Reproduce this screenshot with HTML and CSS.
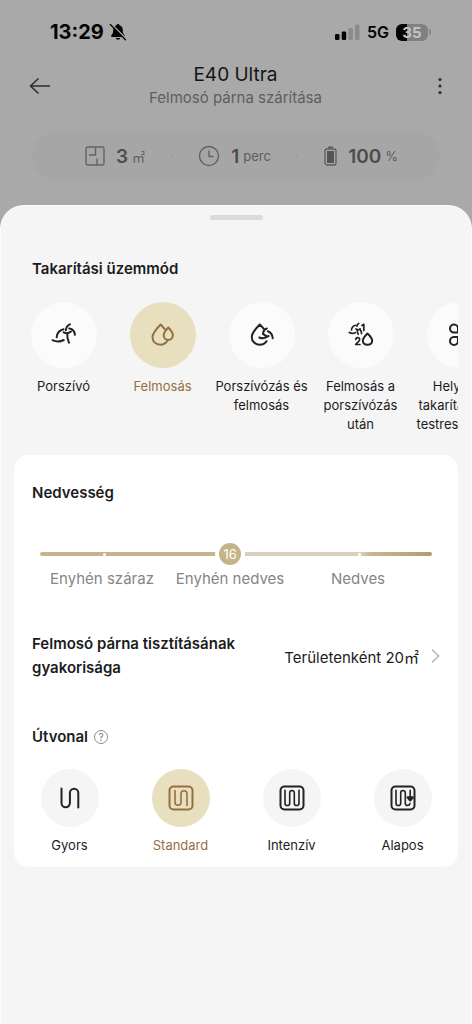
FILE: index.html
```html
<!DOCTYPE html>
<html lang="hu">
<head>
<meta charset="utf-8">
<meta name="viewport" content="width=device-width, initial-scale=1">
<title>E40 Ultra</title>
<link rel="stylesheet" href="styles.css">
</head>
<body>
<div class="screen">
  <div class="status-bar">
    <div class="status-time">13:29
      <svg width="18" height="18" viewBox="0 0 18 18" aria-hidden="true"><path d="M9 1c-.9 0-1.400.5-1.500 1.200C5.200 2.900 4.200 4.800 4.200 7c0 3-.7 4-1.700 5-.8.900-.4 2 .6 2h11.800c1 0 1.400-1.100.6-2-1-1-1.700-2-1.700-5 0-2.200-1-4.100-3.300-4.800C10.400 1.500 9.900 1 9 1zM6.800 15h4.400c-.2 1-1.100 1.700-2.200 1.700S7 16 6.800 15z" fill="#050505"/><path d="M2.600 1.200 17.300 15.900" stroke="#a9a9a9" stroke-width="1.600"/><path d="M1.300 1.500 16.500 16.700" stroke="#050505" stroke-width="1.300" stroke-linecap="round"/></svg>
    </div>
    <div class="status-right">
      <svg width="25" height="16" viewBox="0 0 25 16" aria-hidden="true"><rect x="0" y="10" width="4.500" height="6" rx="1.300" fill="#050505"/><rect x="6.700" y="7.500" width="4.500" height="8.500" rx="1.300" fill="#050505"/><rect x="13.400" y="4" width="4.500" height="12" rx="1.300" fill="#8b8b8b"/><rect x="20" y="0.500" width="4.500" height="15.500" rx="1.300" fill="#8b8b8b"/></svg>
      <span>5G</span>
      <span class="battery"><span class="battery-level">35</span></span>
    </div>
  </div>

  <header class="header">
    <button class="icon-button" type="button" aria-label="Vissza"><svg width="22" height="18" viewBox="0 0 22 18"><path d="M9.500 1.500 1.500 9l8 7.500M1.500 9H21" fill="none" stroke="#2c2c2c" stroke-width="1.500"/></svg></button>
    <div class="header-text">
      <h1>E40 Ultra</h1>
      <p>Felmosó párna szárítása</p>
    </div>
    <button class="icon-button icon-button-end" type="button" aria-label="Továbbiak"><svg width="4" height="18" viewBox="0 0 4 18" fill="#2c2c2c"><circle cx="2" cy="2.500" r="1.600"/><circle cx="2" cy="9" r="1.600"/><circle cx="2" cy="15.500" r="1.600"/></svg></button>
  </header>

  <div class="stats">
    <div class="stat">
      <svg width="20" height="20" viewBox="0 0 20 20" fill="none" stroke="#636363" stroke-width="1.400"><rect x="1" y="1" width="18" height="18" rx="1.500"/><path d="M10.500 1v8H4M12 19v-6.500"/></svg>
      <span class="stat-value">3</span><span class="stat-unit">㎡</span>
    </div>
    <i class="stat-divider"></i>
    <div class="stat">
      <svg width="22" height="22" viewBox="0 0 22 22" fill="none" stroke="#636363" stroke-width="1.400"><circle cx="11" cy="11" r="9.500"/><path d="M11 5.500V11.500h4.500"/></svg>
      <span class="stat-value">1</span><span class="stat-unit">perc</span>
    </div>
    <i class="stat-divider"></i>
    <div class="stat">
      <svg width="13" height="20" viewBox="0 0 13 20"><path d="M4 1.300h5" stroke="#5c5c5c" stroke-width="1.600"/><rect x="1" y="3" width="11" height="16" rx="2" fill="none" stroke="#5c5c5c" stroke-width="1.300"/><rect x="3" y="5" width="7" height="12" fill="#555"/></svg>
      <span class="stat-value">100</span><span class="stat-unit">%</span>
    </div>
  </div>

  <main class="sheet">
    <div class="handle"></div>
    <section class="modes-section">
      <h2>Takarítási üzemmód</h2>
      <div class="modes">
        <button class="option" type="button"><span class="disc"><svg width="26" height="26" viewBox="0 0 26 26"><path d="M1.500 18.200c3.800 1.800 7.800 1.600 11.300-.2M5.700 15.300c.3-3.800 2.800-7.100 6.900-8M14.900 8.300c.2-2.700 1.500-4.900 4-5.900M18.300 6.600c3.300.5 5.300 2.800 5.600 6.200M12.700 10.300c2.300 1.300 4.800 1.100 7.300-.8M16.300 11.200c-.3 3.600.2 6.600 1.700 9.500"/></svg></span><span>Porszívó</span></button>
        <button class="option is-selected" type="button" aria-pressed="true"><span class="disc"><svg width="26" height="26" viewBox="0 0 26 26"><path d="M14.900 7.400 10.700 2.500C6.500 6.700 2.500 10.900 2.500 15.300c0 4.300 3.500 7.400 7.900 7.400 3 0 5.500-1.400 6.900-3.900"/><path d="M18.300 5.500c-2.300 2.500-4.600 5-4.600 7.700s1.900 4.700 4.600 4.700 4.600-2 4.600-4.700-2.300-5.200-4.600-7.700z"/></svg></span><span>Felmosás</span></button>
        <button class="option" type="button"><span class="disc"><svg width="26" height="26" viewBox="0 0 26 26"><path d="M14.900 6.900 10.800 2.500C6.600 6.700 2.800 10.900 2.800 15.200c0 4.300 3.500 7.500 7.900 7.500 2.900 0 5.400-1.300 6.800-3.500M17.800 6.500c-2.200.8-3.700 2.700-3.800 5.400M18.900 9.300c2.700 1 4.600 3.600 4.800 7M14.600 12.300c1.200 1.200 2.200 1.700 3.500 2.200M10.300 15.500c3 1.300 6.300.8 9.300-1.500"/></svg></span><span>Porszívózás és felmosás</span></button>
        <button class="option" type="button"><span class="disc"><svg width="26" height="26" viewBox="0 0 26 26"><g stroke-width="1.700"><path d="M1.300 10.500c1.900 1.100 4 1.100 6 .2M3.500 8c.2-2.400 1.600-4.100 3.900-4.700M9 4.200c.1-1.300.7-2.200 1.700-2.700M8 6.800c1.200 1.200 2.900 1.100 4.200.1M9.300 8.500c0 1.400.3 2.600.9 3.700M11.700 7.100c1.300 1.100 1.900 2.400 1.800 4.500"/><path d="M14 3.500 15.800 2.300V8.500M7.800 17.500c.1-2.500 4-2.300 3.900.1 0 1.700-2.500 2.900-4 4.900H12"/></g><path d="M19.500 11.500c-2.400 2.300-4.700 4.700-4.700 7.100 0 2.500 2 4.200 4.700 4.200s4.700-1.700 4.700-4.200c0-2.400-2.300-4.800-4.700-7.100z"/></svg></span><span>Felmosás a porszívózás után</span></button>
        <button class="option" type="button"><span class="disc"><svg width="26" height="26" viewBox="0 0 26 26"><path d="M11 10.500H6.800A4 4 0 1 1 11 6.500zM15 10.500h4.200A4 4 0 1 0 15 6.500zM11 15H6.800A4 4 0 1 0 11 19zM15 15h4.200A4 4 0 1 1 15 19z"/></svg></span><span>Helyiség takarításának testreszabása</span></button>
      </div>
    </section>

    <div class="card">
      <section class="humidity">
        <h2><label for="humidity">Nedvesség</label></h2>
        <div class="slider">
          <input id="humidity" type="range" min="1" max="32" value="16">
          <i class="tick tick-low"></i><i class="tick tick-high"></i>
          <output class="slider-value" for="humidity">16</output>
        </div>
        <div class="slider-labels"><span>Enyhén száraz</span><span>Enyhén nedves</span><span>Nedves</span></div>
      </section>

      <section class="frequency">
        <h2>Felmosó párna tisztításának gyakorisága</h2>
        <button class="frequency-value" type="button">Területenként 20㎡<svg width="9" height="16" viewBox="0 0 9 16"><path d="M1 1.500 7.700 8 1 14.500" fill="none" stroke="#b5b5b5" stroke-width="1.500"/></svg></button>
      </section>

      <section class="route">
        <div class="route-title">
          <h2>Útvonal</h2>
          <button class="help" type="button" aria-label="Súgó">?</button>
        </div>
        <div class="routes">
          <button class="option" type="button"><span class="disc"><svg width="26" height="26" viewBox="0 0 26 26"><path d="M4.500 3.500V18a4.200 4.200 0 0 0 8.400 0V8a4.200 4.200 0 0 1 8.400 0v14.500"/></svg></span><span>Gyors</span></button>
          <button class="option is-selected" type="button" aria-pressed="true"><span class="disc"><svg width="26" height="26" viewBox="0 0 26 26"><rect x="1.500" y="1.500" width="23" height="23" rx="4"/><path d="M7 5.500v11.700a3 3 0 0 0 6 0V8.800a3 3 0 0 1 6 0v11.700" stroke-width="1.600"/></svg></span><span>Standard</span></button>
          <button class="option" type="button"><span class="disc"><svg width="26" height="26" viewBox="0 0 26 26"><rect x="1.500" y="1.500" width="23" height="23" rx="4"/><path d="M6 5.200v13a2.300 2.300 0 0 0 4.700 0V7.800a2.300 2.300 0 0 1 4.600 0v10.400a2.300 2.300 0 0 0 4.700 0v-13" stroke-width="1.600"/></svg></span><span>Intenzív</span></button>
          <button class="option" type="button"><span class="disc"><svg width="26" height="26" viewBox="0 0 26 26"><rect x="1.500" y="1.500" width="23" height="23" rx="4"/><path d="M6 5.200v13a2.300 2.300 0 0 0 4.700 0V7.800a2.300 2.300 0 0 1 4.600 0v10.400c0 1.500 1 2.300 2.200 2.300 1.500 0 2.200-.8 2.500-2M20.200 5.200V12" stroke-width="1.600"/><path d="m17.500 12.300 2.700 3.200 2.700-3.200z" fill="#222"/></svg></span><span>Alapos</span></button>
        </div>
      </section>
    </div>
  </main>
</div>
</body>
</html>
```
FILE: styles.css
```css
* { box-sizing: border-box; }

body {
  margin: 0;
  background: #a9a9a9;
  color: #1c1c1c;
  font-family: Inter, "Noto Sans CJK SC", sans-serif;
}

h1, h2, p { margin: 0; }

button {
  padding: 0;
  border: 0;
  background: none;
  color: inherit;
  font: inherit;
  cursor: pointer;
}

svg { display: block; flex: none; }

.screen {
  display: flex;
  flex-direction: column;
  min-height: 100vh;
}

/* Status bar */
.status-bar {
  display: flex;
  justify-content: space-between;
  align-items: center;
  height: 40px;
  margin-top: 12px;
  padding: 0 41px 0 50px;
  color: #050505;
}

.status-time {
  display: flex;
  align-items: center;
  gap: 5px;
  font-size: 20px;
  font-weight: 700;
}

.status-right {
  display: flex;
  align-items: center;
  gap: 7px;
  font-size: 16px;
  font-weight: 600;
}

.battery { display: flex; align-items: center; gap: 1px; }
.battery::after {
  content: "";
  width: 2px;
  height: 6px;
  border-radius: 0 2px 2px 0;
  background: #858585;
}
.battery-level {
  width: 32px;
  border-radius: 6px;
  background: linear-gradient(90deg, #050505 35%, #808080 35%);
  color: #c4c4c4;
  font-size: 15px;
  font-weight: 700;
  line-height: 17px;
  text-align: center;
}

/* Header */
.header {
  display: flex;
  justify-content: space-between;
  align-items: center;
  padding: 10px 30px 0 29px;
}

.icon-button { display: flex; width: 32px; padding: 8px 0; }
.icon-button-end { justify-content: flex-end; }

.header-text { text-align: center; }
.header h1 {
  color: #151515;
  font-size: 19px;
  font-weight: 400;
  line-height: 25px;
}
.header p {
  color: #5e5e5e;
  font-size: 15px;
  line-height: 22px;
}

/* Device figures */
.stats {
  display: flex;
  justify-content: space-between;
  align-items: center;
  height: 48px;
  margin: 23px 32px 0;
  padding: 0 42px 0 53px;
  border-radius: 24px;
  background: #a6a6a6;
}

.stat { display: flex; align-items: center; color: #4c4c4c; }
.stat-value {
  margin: 0 4px 0 11px;
  font-size: 19px;
  font-weight: 600;
}
.stat-unit { color: #5c5c5c; font-size: 13px; }
.stat-divider { width: 1px; height: 5px; background: #999; }

/* Bottom sheet */
.sheet {
  flex: 1;
  margin-top: 25px;
  padding: 9px 13px 24px;
  border: 1px solid #fcfcfc;
  border-bottom: 0;
  border-radius: 24px 24px 0 0;
  background: #f5f5f5;
}

.handle {
  width: 53px;
  height: 5px;
  margin: 0 auto;
  border-radius: 3px;
  background: #dbdbdb;
}

h2 {
  font-size: 15px;
  font-weight: 600;
  line-height: 24px;
}

.modes-section h2 { padding: 37px 18px 21px; }

.modes {
  display: flex;
  height: 153px;
  overflow: hidden;
}
.modes .option { flex: 0 0 99px; }

.option {
  display: flex;
  flex-direction: column;
  align-items: center;
  gap: 9px;
  font-size: 13px;
  line-height: 19px;
  text-align: center;
}

.disc {
  display: grid;
  place-items: center;
  width: 66px;
  height: 66px;
  border-radius: 50%;
  background: #fbfbfb;
}
.disc svg {
  fill: none;
  stroke: #222;
  stroke-width: 2;
  stroke-linecap: round;
  stroke-linejoin: round;
}

.is-selected { color: #95703f; }
.is-selected .disc { background: #e8dfbf; }
.is-selected .disc svg { stroke: #95703f; }

/* Settings card */
.card {
  border-radius: 15px;
  background: #fff;
}

.humidity { padding: 26px 18px 0; }

.slider {
  position: relative;
  height: 30px;
  margin: 34px 8px 0;
}
.slider input {
  display: block;
  width: 100%;
  height: 30px;
  margin: 0;
  appearance: none;
  background: none;
}
.slider input::-webkit-slider-runnable-track {
  height: 4px;
  border-radius: 2px;
  background: linear-gradient(90deg, #c8b48c 0 48%, #dad0bf 48% 82%, #c9b98f 84%, #b39b6b);
}
.slider input::-webkit-slider-thumb {
  width: 30px;
  height: 30px;
  margin-top: -13px;
  appearance: none;
  border: 4px solid #fff;
  border-radius: 50%;
  background: #c6b489;
}
.slider-value {
  position: absolute;
  top: 0;
  left: calc(48% - 13px);
  width: 30px;
  color: #fff;
  font-size: 13px;
  line-height: 30px;
  text-align: center;
  pointer-events: none;
}
.tick {
  position: absolute;
  top: 14px;
  width: 3px;
  height: 3px;
  border-radius: 50%;
  background: #fff;
}
.tick-low { left: 16%; }
.tick-high { left: 81%; }

.slider-labels {
  display: grid;
  grid-template-columns: repeat(3, 1fr);
  padding: 0 18px 0 6px;
  color: #858585;
  font-size: 15px;
  line-height: 20px;
  text-align: center;
  white-space: nowrap;
}

.frequency {
  display: flex;
  justify-content: space-between;
  align-items: center;
  padding: 43px 18px 0;
}
.frequency h2 { flex: 0 1 230px; }
.frequency-value {
  display: flex;
  align-items: center;
  font-size: 15px;
  white-space: nowrap;
}
.frequency-value svg { margin-left: 12px; }

.route { padding: 45px 0 12px; }
.route-title {
  display: flex;
  align-items: center;
  gap: 6px;
  padding: 0 18px;
}
.help {
  width: 14px;
  height: 14px;
  border: 1px solid #8c8c8c;
  border-radius: 50%;
  color: #777;
  font-size: 10px;
  line-height: 12px;
}

.routes {
  display: grid;
  grid-template-columns: repeat(4, 1fr);
  padding-top: 20px;
}
.routes .disc {
  width: 58px;
  height: 58px;
}
.routes .option:not(.is-selected) .disc { background: #f5f5f5; }
```
